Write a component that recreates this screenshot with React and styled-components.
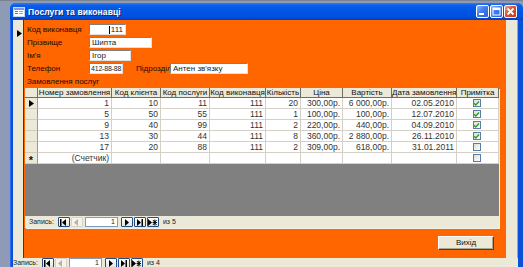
import React from 'react';
import styled, { createGlobalStyle } from 'styled-components';

const GlobalStyle = createGlobalStyle`
  html, body {
    margin: 0;
    padding: 0;
    background: #8e9bb6;
    overflow: hidden;
  }
  body {
    font-family: "Liberation Sans", Arial, sans-serif;
  }
`;

const fields = [
  { label: 'Код виконавця', value: '111', width: 37, align: 'right' },
  { label: 'Прізвище', value: 'Шипта', width: 63 },
  { label: "Ім'я", value: 'Ігор', width: 42 },
];

const columns = [
  { title: 'Номер замовлення', width: 74 },
  { title: 'Код клієнта', width: 49 },
  { title: 'Код послуги', width: 49 },
  { title: 'Код виконавця', width: 56 },
  { title: 'Кількість', width: 35 },
  { title: 'Ціна', width: 42 },
  { title: 'Вартість', width: 49 },
  { title: 'Дата замовлення', width: 65 },
  { title: 'Примітка', width: 42 },
];

const orders = [
  ['1', '10', '11', '111', '20', '300,00р.', '6 000,00р.', '02.05.2010', true],
  ['5', '50', '55', '111', '1', '100,00р.', '100,00р.', '12.07.2010', true],
  ['9', '40', '99', '111', '2', '220,00р.', '440,00р.', '04.09.2010', true],
  ['13', '30', '44', '111', '8', '360,00р.', '2 880,00р.', '26.11.2010', true],
  ['17', '20', '88', '111', '2', '309,00р.', '618,00р.', '31.01.2011', false],
];

function FormIcon() {
  return (
    <svg width="12" height="10" viewBox="0 0 12 10">
      <rect x="0.5" y="0.5" width="11" height="9" fill="#fff" stroke="#c9d7f2" />
      <rect x="1" y="1" width="10" height="2" fill="#7d9fd8" />
      <rect x="2" y="4" width="3" height="1" fill="#5577bb" />
      <rect x="6" y="4" width="4" height="1" fill="#9ab" />
      <rect x="2" y="6" width="3" height="1" fill="#5577bb" />
      <rect x="6" y="6" width="4" height="1" fill="#9ab" />
    </svg>
  );
}

function Arrow() {
  return (
    <svg width="5" height="7" viewBox="0 0 5 7">
      <path d="M0 0 L5 3.5 L0 7 Z" fill="#000" />
    </svg>
  );
}

function NavGlyph({ kind, disabled }) {
  const c = disabled ? '#b5b2a6' : '#000';
  return (
    <svg width="9" height="7" viewBox="0 0 9 7">
      {kind === 'first' && (
        <>
          <rect x="1" y="0" width="1.5" height="7" fill={c} />
          <path d="M7 0 L3 3.5 L7 7 Z" fill={c} />
        </>
      )}
      {kind === 'prev' && <path d="M6 0 L2 3.5 L6 7 Z" fill={c} />}
      {kind === 'next' && <path d="M3 0 L7 3.5 L3 7 Z" fill={c} />}
      {kind === 'last' && (
        <>
          <path d="M2 0 L6 3.5 L2 7 Z" fill={c} />
          <rect x="6.5" y="0" width="1.5" height="7" fill={c} />
        </>
      )}
      {kind === 'new' && (
        <>
          <path d="M0 0 L4 3.5 L0 7 Z" fill={c} />
          <path d="M5 1 L8.5 6 M8.5 1 L5 6 M4.5 3.5 L9 3.5 M6.75 0.5 L6.75 6.5" stroke={c} strokeWidth="0.9" />
        </>
      )}
    </svg>
  );
}

function Navigator({ count, current }) {
  return (
    <NavBar>
      <NavLabel>Запись:</NavLabel>
      <NavButton><NavGlyph kind="first" /></NavButton>
      <NavButton $disabled><NavGlyph kind="prev" disabled /></NavButton>
      <NavBox>{current}</NavBox>
      <NavButton $gap={3}><NavGlyph kind="next" /></NavButton>
      <NavButton><NavGlyph kind="last" /></NavButton>
      <NavButton><NavGlyph kind="new" /></NavButton>
      <NavCount>из {count}</NavCount>
    </NavBar>
  );
}

function Check({ checked }) {
  return (
    <CheckBox>
      {checked && (
        <svg width="7" height="7" viewBox="0 0 7 7">
          <path d="M1 3.2 L2.8 5 L6 1.6" fill="none" stroke="#21a121" strokeWidth="1.4" />
        </svg>
      )}
    </CheckBox>
  );
}

export default function App() {
  return (
    <Screen>
      <GlobalStyle />
      <Window>
        <TitleBar>
          <FormIcon />
          <Title>Послуги та виконавці</Title>
          <TitleButtons>
            <CaptionButton>
              <svg width="13" height="13" viewBox="0 0 13 13">
                <rect x="3" y="8" width="5" height="2" fill="#fff" />
              </svg>
            </CaptionButton>
            <CaptionButton>
              <svg width="13" height="13" viewBox="0 0 13 13">
                <rect x="3" y="3" width="7" height="7" fill="none" stroke="#fff" strokeWidth="1" />
                <rect x="3" y="3" width="7" height="2" fill="#fff" />
              </svg>
            </CaptionButton>
            <CaptionButton $close>
              <svg width="13" height="13" viewBox="0 0 13 13">
                <path d="M3.5 3.5 L9.5 9.5 M9.5 3.5 L3.5 9.5" stroke="#fff" strokeWidth="1.8" />
              </svg>
            </CaptionButton>
          </TitleButtons>
        </TitleBar>

        <Client>
          <Body>
            <Selector>
              <Arrow />
            </Selector>

            <Form>
              <Fields>
                {fields.map((f) => (
                  <FieldRow key={f.label}>
                    <Label>{f.label}</Label>
                    <Input $width={f.width} $align={f.align}>
                      {f.align === 'right' && <Caret />}
                      {f.value}
                    </Input>
                  </FieldRow>
                ))}
                <FieldRow>
                  <Label>Телефон</Label>
                  <Input $width={34} $tight>412-88-88</Input>
                  <Label $width={34} $indent={13}>Підрозділ</Label>
                  <Input $width={78}>Антен зв'язку</Input>
                </FieldRow>
              </Fields>

              <SubLabel>Замовлення послуг</SubLabel>

              <SubForm>
                <Grid>
                  <HeadCell />
                  {columns.map((c) => (
                    <HeadCell key={c.title}>{c.title}</HeadCell>
                  ))}

                  {orders.map((row, i) => (
                    <React.Fragment key={row[0]}>
                      <RowSelector>{i === 0 && <Arrow />}</RowSelector>
                      {row.slice(0, 8).map((v, j) => (
                        <Cell key={j}>{v}</Cell>
                      ))}
                      <Cell $center>
                        <Check checked={row[8]} />
                      </Cell>
                    </React.Fragment>
                  ))}

                  <RowSelector>
                    <Star>*</Star>
                  </RowSelector>
                  <Cell>(Счетчик)</Cell>
                  {columns.slice(1, 8).map((c) => (
                    <Cell key={c.title} />
                  ))}
                  <Cell $center>
                    <Check />
                  </Cell>
                </Grid>
                <Empty />
                <SubNav>
                  <Navigator count={5} current={1} />
                </SubNav>
              </SubForm>

              <Footer>
                <ExitButton>Вихід</ExitButton>
              </Footer>
            </Form>

            <Strip />
          </Body>
          <Navigator count={4} current={1} />
        </Client>
      </Window>
    </Screen>
  );
}

const Screen = styled.div`
  width: 523px;
  height: 267px;
  box-sizing: border-box;
  padding: 2px 0 0 10px;
  border-top: 1px solid #7a8296;
  overflow: hidden;
`;

const Window = styled.div`
  display: flex;
  flex-direction: column;
  width: 513px;
  height: 290px;
  background: #0a50d8;
  border-radius: 6px 6px 0 0;
  box-shadow: inset 1px 0 0 #2c6cf0;
`;

const TitleBar = styled.div`
  display: flex;
  align-items: center;
  height: 17px;
  padding-left: 3px;
  border-radius: 6px 6px 0 0;
  background: linear-gradient(#2f7af5 0%, #0a5ee9 15%, #0055e5 45%, #0150dc 80%, #0040c8 100%);
`;

const Title = styled.span`
  margin-left: 3px;
  color: #fff;
  font-family: "Liberation Sans", Arial, sans-serif;
  font-size: 8.5px;
  font-weight: bold;
  letter-spacing: 0.1px;
  text-shadow: 1px 1px 0 #0a2a80;
`;

const TitleButtons = styled.div`
  display: flex;
  gap: 1px;
  margin-left: auto;
  margin-right: 6px;
`;

const CaptionButton = styled.div`
  display: flex;
  width: 13px;
  height: 13px;
  box-sizing: border-box;
  border: 1px solid #fff;
  border-radius: 2px;
  background: ${(p) =>
    p.$close
      ? 'linear-gradient(135deg, #f0a08a, #e0512d 45%, #c43a18)'
      : 'linear-gradient(135deg, #8cb2fa, #3f7cf0 45%, #2a5fdc)'};
  svg {
    margin: -1px;
  }
`;

const Client = styled.div`
  display: flex;
  flex-direction: column;
  margin: 0 5px 0 3px;
  background: #ece9d8;
  flex: 1;
`;

const Body = styled.div`
  display: flex;
  height: 238px;
`;

const Selector = styled.div`
  width: 11px;
  box-sizing: border-box;
  padding: 3px 0 0 4px;
  border-right: 1px solid #3b3b3b;
  background: #ece9d8;
`;

const Form = styled.div`
  display: flex;
  flex-direction: column;
  width: 482px;
  background: #ff6600;
`;

const Strip = styled.div`
  flex: 1;
  border-right: 1px solid #a8a595;
`;

const Fields = styled.div`
  display: flex;
  flex-direction: column;
  gap: 2px;
  padding: 4px 0 0 3px;
`;

const FieldRow = styled.div`
  display: flex;
  align-items: center;
  height: 11px;
`;

const Label = styled.span`
  width: ${(p) => p.$width || 62}px;
  margin-left: ${(p) => p.$indent || 0}px;
  font-size: 8px;
  color: #1a0a00;
  white-space: nowrap;
`;

const Input = styled.div`
  display: flex;
  align-items: center;
  justify-content: ${(p) => (p.$align === 'right' ? 'flex-end' : 'flex-start')};
  width: ${(p) => p.$width}px;
  height: 11px;
  box-sizing: border-box;
  padding: 0 ${(p) => (p.$tight ? 0 : 2)}px 0 ${(p) => (p.$tight ? 1 : 2)}px;
  border-top: 1px solid #7f7f7f;
  border-left: 1px solid #7f7f7f;
  border-right: 1px solid #e0e0e0;
  border-bottom: 1px solid #e0e0e0;
  background: #fff;
  font-size: ${(p) => (p.$tight ? 7 : 8)}px;
  letter-spacing: ${(p) => (p.$tight ? '-0.2px' : '0')};
  color: #222;
  white-space: nowrap;
  overflow: hidden;
`;

const Caret = styled.span`
  width: 1px;
  height: 8px;
  margin-right: 1px;
  background: #000;
`;

const SubLabel = styled.div`
  margin: 3px 0 0 3px;
  height: 10px;
  font-size: 8px;
  line-height: 10px;
  color: #1a0a00;
`;

const SubForm = styled.div`
  display: flex;
  flex-direction: column;
  width: 474px;
  height: 140px;
  margin: 1px 0 0 1px;
  background: #808080;
  box-shadow: 1px 1px 0 #f4f2e8;
`;

const Grid = styled.div`
  display: grid;
  grid-template-columns: 13px ${columns.map((c) => `${c.width}px`).join(' ')};
  grid-template-rows: 10px repeat(6, 11px);
  background: #fff;
`;

const HeadCell = styled.div`
  box-sizing: border-box;
  border-right: 1px solid #6f6d64;
  border-bottom: 1px solid #6f6d64;
  background: #ece9d8;
  font-size: 8px;
  line-height: 9px;
  color: #111;
  text-align: center;
  white-space: nowrap;
  overflow: hidden;
`;

const RowSelector = styled.div`
  display: flex;
  align-items: center;
  justify-content: center;
  box-sizing: border-box;
  border-right: 1px solid #9d9a8c;
  border-bottom: 1px solid #cfcbbb;
  background: #ece9d8;
`;

const Star = styled.span`
  font-size: 11px;
  line-height: 8px;
  margin-top: 3px;
  font-weight: bold;
  color: #111;
`;

const Cell = styled.div`
  display: flex;
  align-items: center;
  justify-content: ${(p) => (p.$center ? 'center' : 'flex-end')};
  box-sizing: border-box;
  padding-right: 2px;
  border-right: 1px solid #d4d0c8;
  border-bottom: 1px solid #d4d0c8;
  font-size: 8.5px;
  color: #333;
  white-space: nowrap;
  overflow: hidden;
`;

const CheckBox = styled.div`
  display: flex;
  align-items: center;
  justify-content: center;
  width: 8px;
  height: 8px;
  box-sizing: border-box;
  border: 1px solid #5a7ba6;
  background: linear-gradient(135deg, #dcdcd6, #fff);
  svg {
    margin: -1px;
  }
`;

const Empty = styled.div`
  flex: 1;
`;

const SubNav = styled.div`
  display: flex;
  align-items: center;
  height: 12px;
  padding-left: 4px;
  background: #ece9d8;
`;

const NavBar = styled.div`
  display: flex;
  align-items: center;
  height: 10px;
  background: #ece9d8;
`;

const NavLabel = styled.span`
  margin-right: 3px;
  font-size: 7px;
  line-height: 8px;
  color: #222;
`;

const NavButton = styled.div`
  display: flex;
  align-items: center;
  justify-content: center;
  width: 12px;
  height: 10px;
  margin-left: ${(p) => p.$gap || 1}px;
  box-sizing: border-box;
  border: 1px solid ${(p) => (p.$disabled ? '#d6d3c5' : '#1f4d86')};
  border-radius: 1px;
  background: ${(p) => (p.$disabled ? '#f4f3ec' : 'linear-gradient(#ffffff, #e6e5dc)')};
`;

const NavBox = styled.div`
  width: 33px;
  height: 10px;
  margin-left: 2px;
  box-sizing: border-box;
  padding-right: 2px;
  border: 1px solid #7f9db9;
  background: #fff;
  font-size: 7px;
  line-height: 8px;
  text-align: right;
  color: #222;
`;

const NavCount = styled.span`
  margin-left: 4px;
  font-size: 7px;
  line-height: 8px;
  color: #222;
`;

const Footer = styled.div`
  display: flex;
  justify-content: flex-end;
  align-items: flex-start;
  flex: 1;
  padding: 8px 12px 0 0;
`;

const ExitButton = styled.div`
  width: 56px;
  height: 14px;
  box-sizing: border-box;
  border-top: 1px solid #fff;
  border-left: 1px solid #fff;
  border-right: 1px solid #404040;
  border-bottom: 1px solid #404040;
  box-shadow: inset -1px -1px 0 #aca899;
  background: #ece9d8;
  font-size: 8px;
  line-height: 12px;
  text-align: center;
  color: #111;
`;
